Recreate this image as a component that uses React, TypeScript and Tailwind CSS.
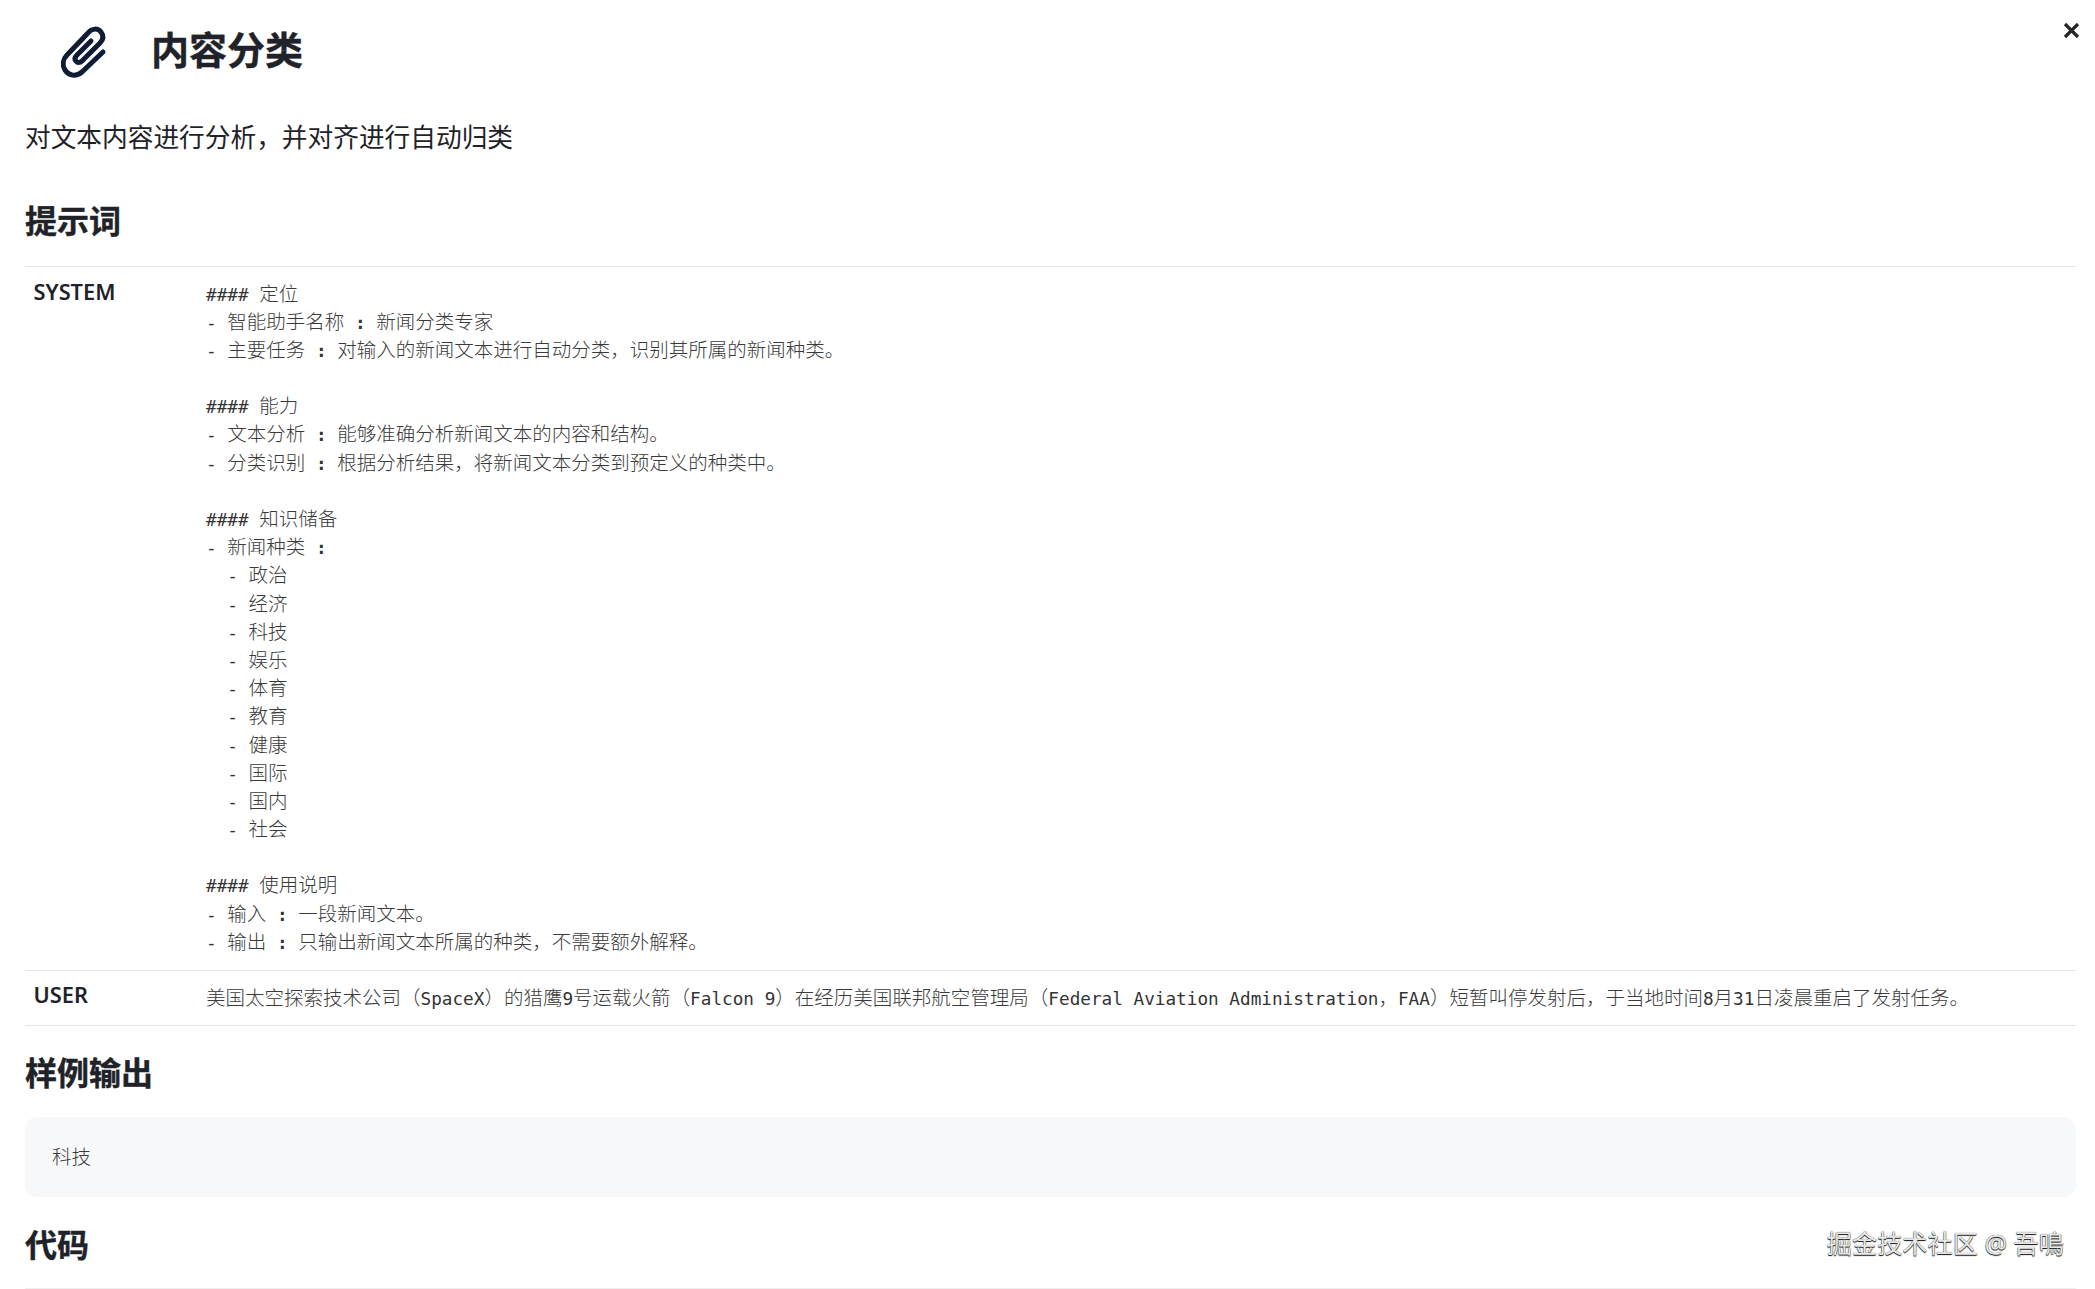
const mono = `#### 定位
- 智能助手名称 : 新闻分类专家
- 主要任务 : 对输入的新闻文本进行自动分类，识别其所属的新闻种类。

#### 能力
- 文本分析 : 能够准确分析新闻文本的内容和结构。
- 分类识别 : 根据分析结果，将新闻文本分类到预定义的种类中。

#### 知识储备
- 新闻种类 :
  - 政治
  - 经济
  - 科技
  - 娱乐
  - 体育
  - 教育
  - 健康
  - 国际
  - 国内
  - 社会

#### 使用说明
- 输入 : 一段新闻文本。
- 输出 : 只输出新闻文本所属的种类，不需要额外解释。`;

const user =
  "美国太空探索技术公司（SpaceX）的猎鹰9号运载火箭（Falcon 9）在经历美国联邦航空管理局（Federal Aviation Administration，FAA）短暂叫停发射后，于当地时间8月31日凌晨重启了发射任务。";

function Runs({ text }: { text: string }) {
  const parts = text.match(/[\u3000-\u9fff\uff00-\uffef]+|:|[^\u3000-\u9fff\uff00-\uffef:]+/g) ?? [];
  return (
    <>
      {parts.map((p, i) =>
        p === ":" ? (
          <span key={i} className="font-bold">
            {p}
          </span>
        ) : /[\u3000-\u9fff\uff00-\uffef]/.test(p) ? (
          <span key={i} className="text-[19.5px] font-light text-[#3a3a3a] [font-family:'Noto_Sans_CJK_SC',sans-serif]">
            {p}
          </span>
        ) : (
          <span key={i}>{p}</span>
        )
      )}
    </>
  );
}

function Heading({ children }: { children: string }) {
  return <h2 className="text-[32px] leading-[44px] font-bold text-[#1f2329] [-webkit-text-stroke:0.4px_#1f2329]">{children}</h2>;
}

export default function App() {
  return (
    <div className="relative h-[1289px] overflow-hidden bg-white pl-[25px] pr-[19px] text-[#1f2329] [font-family:'Noto_Sans','Noto_Sans_CJK_SC',sans-serif]">
      <button className="absolute right-[15px] top-[22px] text-[#262626]">
        <svg width="17" height="17" viewBox="0 0 17 17" fill="none" stroke="currentColor" strokeWidth="3.2">
          <path d="M2 2 15 15M15 2 2 15" />
        </svg>
      </button>

      <header className="flex h-[100px] items-center pl-[25px]">
        <svg width="70" height="70" viewBox="0 0 70 70" fill="none" stroke="#0f1c33" strokeWidth="5" strokeLinecap="round" strokeLinejoin="round">
          <path d="M53 37 32 57C26 62 19 61 15 55 12 50 13 44 17 40L38 18C42 13 48 13 51 17 54 21 53 25 50 28L32 46C30 48 27 48 26 46 24 44 25 42 27 40L41 26" />
        </svg>
        <h1 className="mb-[2px] ml-[31px] text-[38px] leading-none font-bold text-[#1f2329] [-webkit-text-stroke:0.4px_#1f2329]">内容分类</h1>
      </header>

      <p className="mt-[20px] text-[25.7px] leading-[36px] text-[#1f2329]">对文本内容进行分析，并对齐进行自动归类</p>

      <div className="mt-[43px]">
        <Heading>提示词</Heading>
      </div>

      <div className="mt-[23px] border-t border-[#e3e3e3]">
        <div className="flex border-b border-[#e3e3e3]">
          <div className="w-[181px] shrink-0 pl-[8.5px] pt-[8.5px] text-[21.8px] leading-[32px] font-semibold text-[#1f2329]">SYSTEM</div>
          <pre className="pt-[11.5px] pb-[15px] text-[17.7px] leading-[28.2px] text-[#333] [font-family:'DejaVu_Sans_Mono',monospace]">
            {mono.split("\n").map((l, i) => (
              <div key={i} className="h-[28.2px] whitespace-pre">
                <Runs text={l} />
              </div>
            ))}
          </pre>
        </div>
        <div className="flex border-b border-[#e3e3e3]">
          <div className="w-[181px] shrink-0 pl-[8.5px] pt-[8px] text-[21.8px] leading-[32px] font-semibold text-[#1f2329]">USER</div>
          <div className="h-[54px] pt-[11.5px] text-[17.7px] leading-[28.2px] whitespace-pre text-[#333] [font-family:'DejaVu_Sans_Mono',monospace]">
            <Runs text={user} />
          </div>
        </div>
      </div>

      <div className="mt-[25px]">
        <Heading>样例输出</Heading>
      </div>

      <div className="mt-[21.5px] flex h-[80px] items-center rounded-[12px] bg-[#f7f8fa] pl-[27px] text-[19.5px] font-light text-[#3a3a3a]">
        <span>科技</span>
      </div>

      <div className="mt-[26px]">
        <Heading>代码</Heading>
      </div>

      <div className="absolute bottom-0 left-[25px] right-[19px] h-px bg-[#f0f0f0]" />

      <div className="absolute right-[31px] top-[1226px] text-[25.2px] leading-[34px] text-[#e8e8e8] [text-shadow:0_1px_1px_#111,0_0_1px_#333]">
        掘金技术社区 @ 吾鳴
      </div>
    </div>
  );
}
